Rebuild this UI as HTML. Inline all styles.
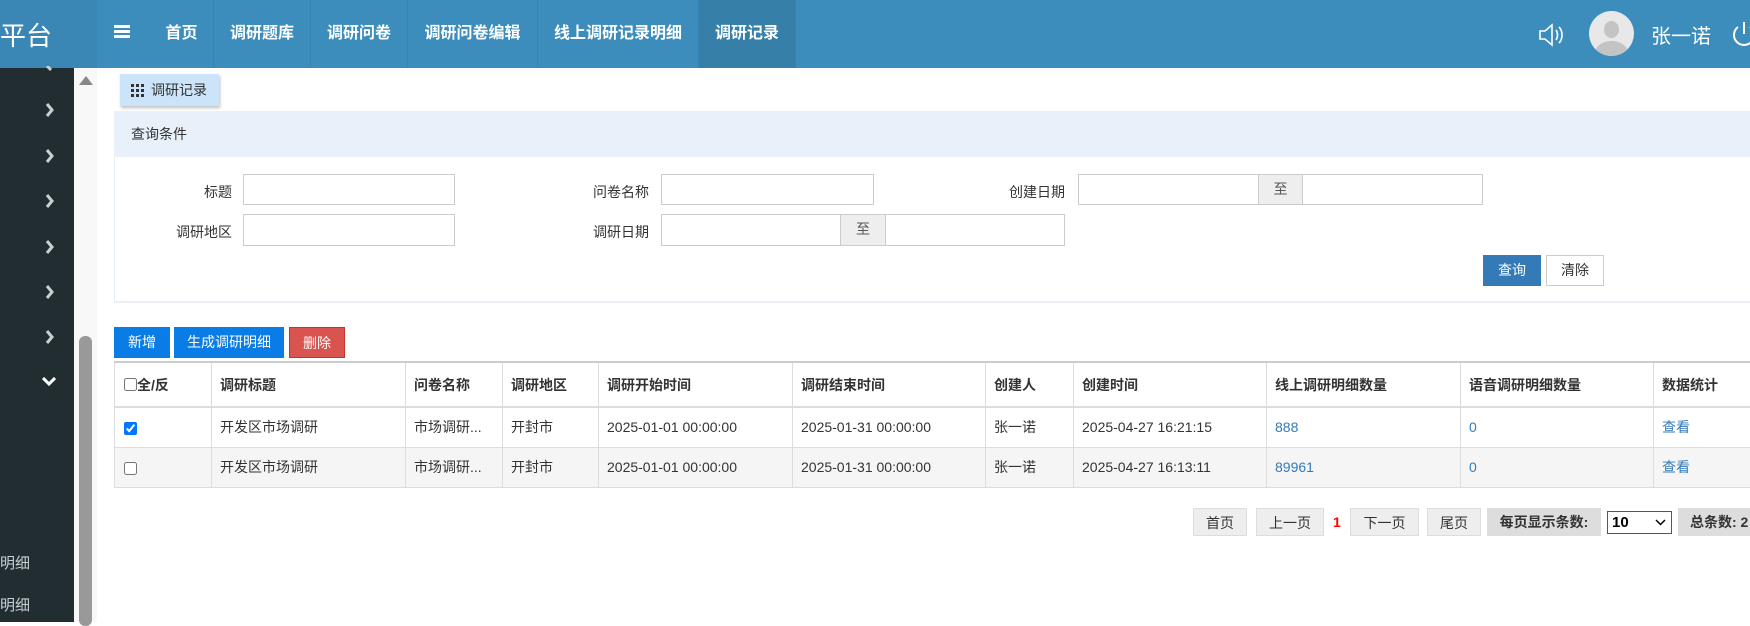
<!DOCTYPE html>
<html><head><meta charset="utf-8"><style>
*{box-sizing:border-box;margin:0;padding:0}
body{width:1750px;height:622px;overflow:hidden;background:#fff;font-family:"Liberation Sans","Noto Sans CJK SC",sans-serif;font-size:14px;color:#333;position:relative}
.abs{position:absolute}
#hdr{left:0;top:0;width:1750px;height:68px;background:#3c8dbc}
#logo{left:0;top:0;width:97px;height:68px;background:#3a87b5;overflow:hidden}
#logo span{position:absolute;right:45px;top:16px;font-size:26px;color:#fff;white-space:nowrap}
.nav{top:0;height:68px;line-height:68px;color:#fff;font-size:16px;font-weight:bold;text-align:center;border-left:1px solid #3783b0}
#side{left:0;top:68px;width:74px;height:554px;background:#222d32}
.chev{left:45px}
#gut{left:74px;top:68px;width:23px;height:554px;background:#f8f8f8}
.inp{border:1px solid #ccc;background:#fff;height:31px}
.lbl{font-size:14px;color:#333;text-align:right}
.zhi{background:#eee;border:1px solid #ccc;text-align:center;line-height:29px;color:#555;height:31px}
.btn{color:#fff;font-size:14px;text-align:center;line-height:31px;height:31px}
table{border-collapse:collapse;position:absolute;left:114px;top:361px;width:1650px;table-layout:fixed}
td,th{border:1px solid #ddd;padding:0 0 0 8px;text-align:left;font-size:14px;white-space:nowrap;overflow:hidden}
th{height:45px;font-weight:bold;border-top:2px solid #ccc;border-bottom:2px solid #ddd}
td{height:40px}
tr.g td{background:#f5f5f5}
a{color:#337ab7;text-decoration:none}
.pg{top:508px;height:28px;line-height:28px;background:#eee;border:1px solid #ddd;text-align:center;font-size:14px;color:#333}
</style></head><body>
<div id="hdr" class="abs"></div>
<div id="logo" class="abs"><span>管理平台</span></div>
<div class="abs" style="left:114px;top:25px;width:16px;height:16px">
<div style="height:3px;background:#fff;margin-bottom:2px"></div><div style="height:3px;background:#fff;margin-bottom:2px"></div><div style="height:3px;background:#fff"></div></div>
<div class="abs nav" style="left:150px;width:63px;border:none">首页</div>
<div class="abs nav" style="left:213px;width:97px">调研题库</div>
<div class="abs nav" style="left:310px;width:97px">调研问卷</div>
<div class="abs nav" style="left:407px;width:130px">调研问卷编辑</div>
<div class="abs nav" style="left:537px;width:161px">线上调研记录明细</div>
<div class="abs nav" style="left:698px;width:97px;background:#367fa9">调研记录</div>
<div class="abs nav" style="left:795px;width:1px;padding:0"></div>
<svg class="abs" style="left:1538px;top:22px" width="28" height="26" viewBox="0 0 28 26" fill="none" stroke="#fff" stroke-width="1.6"><path d="M2 9h5l7-6v20l-7-6H2z"/><path d="M18 8c2 3 2 7 0 10M21 5c4 4 4 12 0 16"/></svg>
<div class="abs" style="left:1589px;top:11px;width:45px;height:45px;border-radius:50%;background:#e8e8e8;overflow:hidden">
<div class="abs" style="left:15px;top:10px;width:15px;height:17px;border-radius:50%;background:#c4c4c4"></div>
<div class="abs" style="left:6px;top:30px;width:33px;height:24px;border-radius:50%;background:#c4c4c4"></div></div>
<div class="abs" style="left:1651px;top:20px;color:#fff;font-size:20px">张一诺</div>
<svg class="abs" style="left:1731px;top:20px" width="24" height="28" viewBox="0 0 24 28" fill="none" stroke="#fff" stroke-width="2"><path d="M7 7a10 10 0 1 0 12 0"/><path d="M13 2v12"/></svg>

<div id="side" class="abs"></div>
<svg class="abs chev" style="top:66px" width="10" height="8" viewBox="0 0 10 8"><path d="M2 0l4 4" stroke="#c9d0d4" stroke-width="3" fill="none"/></svg>
<svg class="abs chev" style="top:103px" width="10" height="14" viewBox="0 0 10 14"><path d="M2 1l5 6-5 6" stroke="#c9d0d4" stroke-width="3" fill="none"/></svg>
<svg class="abs chev" style="top:149px" width="10" height="14" viewBox="0 0 10 14"><path d="M2 1l5 6-5 6" stroke="#c9d0d4" stroke-width="3" fill="none"/></svg>
<svg class="abs chev" style="top:194px" width="10" height="14" viewBox="0 0 10 14"><path d="M2 1l5 6-5 6" stroke="#c9d0d4" stroke-width="3" fill="none"/></svg>
<svg class="abs chev" style="top:240px" width="10" height="14" viewBox="0 0 10 14"><path d="M2 1l5 6-5 6" stroke="#c9d0d4" stroke-width="3" fill="none"/></svg>
<svg class="abs chev" style="top:285px" width="10" height="14" viewBox="0 0 10 14"><path d="M2 1l5 6-5 6" stroke="#c9d0d4" stroke-width="3" fill="none"/></svg>
<svg class="abs chev" style="top:330px" width="10" height="14" viewBox="0 0 10 14"><path d="M2 1l5 6-5 6" stroke="#c9d0d4" stroke-width="3" fill="none"/></svg>
<svg class="abs" style="left:42px;top:377px" width="14" height="10" viewBox="0 0 14 10"><path d="M1 1l6 6 6-6" stroke="#fff" stroke-width="3" fill="none"/></svg>
<div class="abs" style="left:0;top:552px;color:#c9d0d4;font-size:15px">明细</div>
<div class="abs" style="left:0;top:594px;color:#c9d0d4;font-size:15px">明细</div>
<div id="gut" class="abs"></div>
<div class="abs" style="left:79px;top:76px;width:0;height:0;border-left:7px solid transparent;border-right:7px solid transparent;border-bottom:9px solid #888"></div>
<div class="abs" style="left:79px;top:336px;width:13px;height:290px;border-radius:6px;background:#999"></div>

<div class="abs" style="left:120px;top:74px;width:99px;height:32px;background:#cce4f9;box-shadow:1px 2px 3px rgba(0,0,0,.25);font-size:14px;line-height:32px;padding-left:31px;color:#333">调研记录</div>
<svg class="abs" style="left:131px;top:84px" width="13" height="13" viewBox="0 0 13 13" fill="#333"><rect x="0" y="0" width="3" height="3"/><rect x="5" y="0" width="3" height="3"/><rect x="10" y="0" width="3" height="3"/><rect x="0" y="5" width="3" height="3"/><rect x="5" y="5" width="3" height="3"/><rect x="10" y="5" width="3" height="3"/><rect x="0" y="10" width="3" height="3"/><rect x="5" y="10" width="3" height="3"/><rect x="10" y="10" width="3" height="3"/></svg>

<div class="abs" style="left:114px;top:111px;width:1650px;height:192px;border:1px solid #e6eef6;border-bottom:2px solid #eaf0f5"></div>
<div class="abs" style="left:114px;top:111px;width:1650px;height:46px;background:#e8f1fa;line-height:46px;padding-left:17px">查询条件</div>

<div class="abs lbl" style="left:150px;top:182px;width:82px">标题</div>
<div class="abs inp" style="left:243px;top:174px;width:212px"></div>
<div class="abs lbl" style="left:560px;top:182px;width:89px">问卷名称</div>
<div class="abs inp" style="left:661px;top:174px;width:213px"></div>
<div class="abs lbl" style="left:980px;top:182px;width:85px">创建日期</div>
<div class="abs inp" style="left:1078px;top:174px;width:181px"></div>
<div class="abs zhi" style="left:1258px;top:174px;width:45px">至</div>
<div class="abs inp" style="left:1302px;top:174px;width:181px"></div>

<div class="abs lbl" style="left:150px;top:222px;width:82px">调研地区</div>
<div class="abs inp" style="left:243px;top:214px;width:212px;height:32px"></div>
<div class="abs lbl" style="left:560px;top:222px;width:89px">调研日期</div>
<div class="abs inp" style="left:661px;top:214px;width:180px;height:32px"></div>
<div class="abs zhi" style="left:840px;top:214px;width:46px;height:32px">至</div>
<div class="abs inp" style="left:885px;top:214px;width:180px;height:32px"></div>

<div class="abs btn" style="left:1483px;top:255px;width:58px;background:#337ab7">查询</div>
<div class="abs" style="left:1546px;top:255px;width:58px;height:31px;border:1px solid #ccc;text-align:center;line-height:29px">清除</div>

<div class="abs btn" style="left:114px;top:327px;width:56px;background:#0a7ce6">新增</div>
<div class="abs btn" style="left:174px;top:327px;width:110px;background:#0a7ce6">生成调研明细</div>
<div class="abs btn" style="left:289px;top:327px;width:56px;background:#d9534f;border:1px solid #c9302c">删除</div>

<table>
<colgroup><col style="width:97px"><col style="width:194px"><col style="width:97px"><col style="width:96px"><col style="width:194px"><col style="width:193px"><col style="width:88px"><col style="width:193px"><col style="width:194px"><col style="width:193px"><col style="width:111px"></colgroup>
<tr><th style="padding-left:9px"><input type="checkbox" style="width:13px;height:13px;margin:0;vertical-align:-1px">全/反</th><th>调研标题</th><th>问卷名称</th><th>调研地区</th><th>调研开始时间</th><th>调研结束时间</th><th>创建人</th><th>创建时间</th><th>线上调研明细数量</th><th>语音调研明细数量</th><th>数据统计</th></tr>
<tr><td style="padding-left:9px"><input type="checkbox" checked style="width:13px;height:13px;margin:0;vertical-align:middle"></td><td>开发区市场调研</td><td>市场调研...</td><td>开封市</td><td>2025-01-01 00:00:00</td><td>2025-01-31 00:00:00</td><td>张一诺</td><td>2025-04-27 16:21:15</td><td><a>888</a></td><td><a>0</a></td><td><a>查看</a></td></tr>
<tr class="g"><td style="padding-left:9px"><input type="checkbox" style="width:13px;height:13px;margin:0;vertical-align:middle"></td><td>开发区市场调研</td><td>市场调研...</td><td>开封市</td><td>2025-01-01 00:00:00</td><td>2025-01-31 00:00:00</td><td>张一诺</td><td>2025-04-27 16:13:11</td><td><a>89961</a></td><td><a>0</a></td><td><a>查看</a></td></tr>
</table>

<div class="abs pg" style="left:1193px;width:54px">首页</div>
<div class="abs pg" style="left:1256px;width:68px">上一页</div>
<div class="abs" style="left:1333px;top:508px;line-height:28px;color:#f00;font-weight:bold">1</div>
<div class="abs pg" style="left:1350px;width:69px">下一页</div>
<div class="abs pg" style="left:1427px;width:54px">尾页</div>
<div class="abs pg" style="left:1487px;width:114px;background:#ddd;font-weight:bold;border:none">每页显示条数:</div>
<div class="abs" style="left:1607px;top:511px;width:65px;height:23px;border:1px solid #555;background:#fff;font-size:15px;font-weight:bold;line-height:21px;padding-left:4px;color:#000">10<svg class="abs" style="left:47px;top:7px" width="11" height="7" viewBox="0 0 11 7"><path d="M1 1l4.5 4.5L10 1" stroke="#000" stroke-width="1.5" fill="none"/></svg></div>
<div class="abs pg" style="left:1678px;width:100px;background:#ddd;font-weight:bold;border:none;text-align:left;padding-left:12px">总条数: 2</div>
</body></html>
